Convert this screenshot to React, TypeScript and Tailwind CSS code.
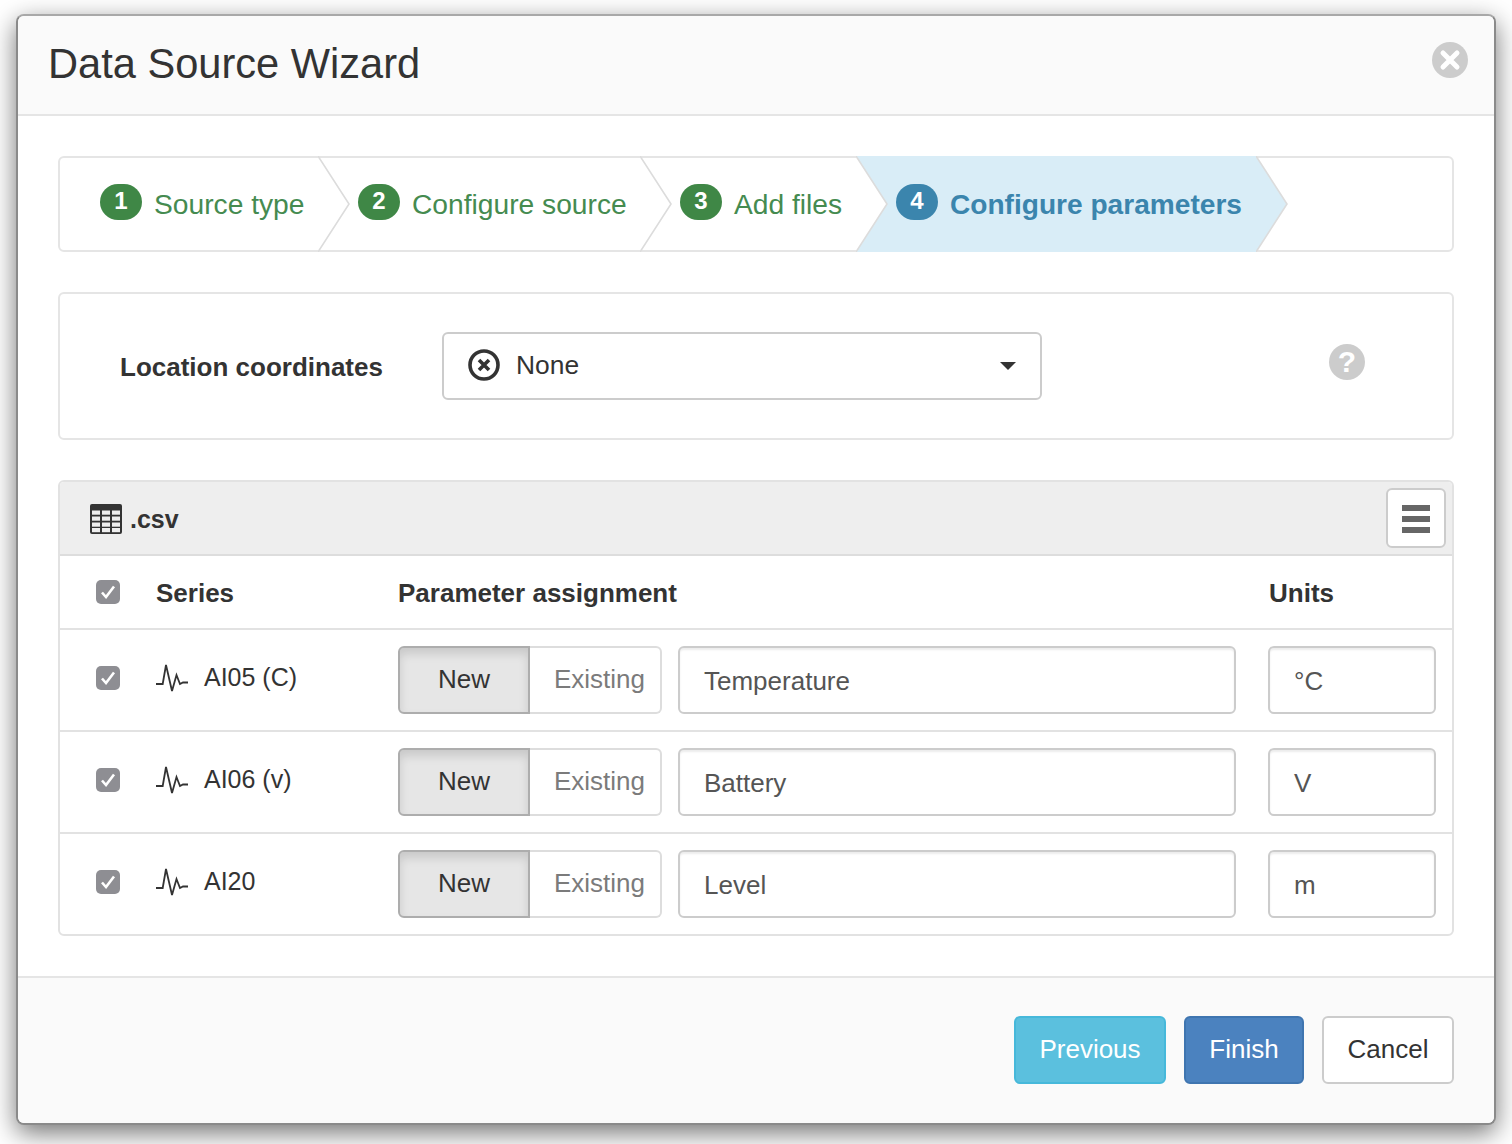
import React from "react";

const Badge = ({ n, blue }: { n: string; blue?: boolean }) => (
  <span
    className={`mb-[4px] flex h-[36px] w-[42px] shrink-0 justify-center rounded-[20px] text-[24px] font-bold leading-[33px] text-white ${
      blue ? "bg-[#3b85ad]" : "bg-[#3f8746]"
    }`}
  >
    {n}
  </span>
);

const Chevron = ({ fill }: { fill: string }) => (
  <svg className="absolute left-full top-0 z-10" width="33" height="96" viewBox="0 0 33 96">
    <polygon points="0,0 31,48 0,96" fill={fill} />
    <polyline points="0,0 31,48 0,96" fill="none" stroke="#dcdcdc" strokeWidth="1.6" />
  </svg>
);

const Step = ({ n, label, w, pl }: { n: string; label: string; w: string; pl: string }) => (
  <div className={`relative -my-[2px] flex items-center gap-3 ${w} ${pl}`}>
    <Badge n={n} />
    <span className="pt-[1px] text-[28.2px] text-[#458b50]">{label}</span>
    <Chevron fill="#ffffff" />
  </div>
);

const Check = () => (
  <span className="flex h-[24px] w-[24px] shrink-0 items-center justify-center rounded-[5px] bg-[#8e8e93]">
    <svg width="16" height="14" viewBox="0 0 16 14" fill="none">
      <polyline points="2,7.5 6,12 14,1.5" stroke="#ffffff" strokeWidth="2.6" />
    </svg>
  </span>
);

const Pulse = () => (
  <svg width="32" height="28" viewBox="0 0 32 28" fill="none" className="shrink-0">
    <polyline
      points="0,20 6.7,20 10,1 16,27 20.5,11 24,20 27,18.5 32,18.5"
      stroke="#333333"
      strokeWidth="1.8"
    />
  </svg>
);

const Field = ({ value, w }: { value: string; w: string }) => (
  <div
    className={`flex h-[68px] shrink-0 items-center rounded-[6px] border-2 border-[#cccccc] bg-white pl-[24px] pt-[3px] text-[26px] text-[#555555] shadow-[inset_0_2px_2px_rgba(0,0,0,0.075)] ${w}`}
  >
    {value}
  </div>
);

const Row = ({
  name,
  param,
  unit,
  last,
}: {
  name: string;
  param: string;
  unit: string;
  last?: boolean;
}) => (
  <div className={`flex items-center ${last ? "h-[100px]" : "h-[102px] border-b-2 border-[#e2e2e2]"}`}>
    <div className="flex w-[338px] items-center pb-[4px] pl-[36px] text-[#333333]">
      <Check />
      <span className="ml-[36px]">
        <Pulse />
      </span>
      <span className="ml-[16px] text-[25px]">{name}</span>
    </div>
    <div className="flex h-[68px] w-[264px] shrink-0 text-[26px]">
      <div className="flex w-[132px] items-center justify-center rounded-l-[6px] border-2 border-[#adadad] bg-[#e6e6e6] pb-[1px] text-[#333333] shadow-[inset_0_6px_10px_rgba(0,0,0,0.125)]">
        New
      </div>
      <div className="flex flex-1 items-center justify-end rounded-r-[6px] border-2 border-l-0 border-[#dddddd] bg-white pb-[1px] pr-[15px] text-[#7b7b7b]">
        Existing
      </div>
    </div>
    <div className="ml-[16px]">
      <Field value={param} w="w-[558px]" />
    </div>
    <div className="ml-[32px]">
      <Field value={unit} w="w-[168px]" />
    </div>
  </div>
);

export default function App() {
  return (
    <div className="h-[1144px] overflow-hidden bg-white pl-[16px] pt-[14px] font-['Liberation_Sans',Arial,sans-serif] text-[#333333]">
      <div className="flex h-[1111px] w-[1480px] flex-col rounded-[8px] border-2 border-[#8a8a8a] border-t-[#a8a8a8] bg-white shadow-[0_8px_26px_rgba(0,0,0,0.55)]">
        {/* Header */}
        <div className="flex h-[100px] shrink-0 items-center justify-between rounded-t-[6px] border-b-2 border-[#e5e5e5] bg-[#fafafa] pl-[30px] pr-[26px]">
          <h1 className="pb-[3px] text-[41.6px] font-normal leading-none text-[#333333]">Data Source Wizard</h1>
          <svg width="36" height="36" viewBox="0 0 36 36" className="mb-[10px]">
            <circle cx="18" cy="18" r="18" fill="#cccccc" />
            <path d="M11 11 L25 25 M25 11 L11 25" stroke="#ffffff" strokeWidth="5" strokeLinecap="round" />
          </svg>
        </div>

        {/* Body */}
        <div className="flex-1 px-[40px] pt-[40px]">
          {/* Stepper */}
          <div className="flex h-[96px] rounded-[6px] border-2 border-[#e5e5e5] bg-white">
            <Step n="1" label="Source type" w="w-[258px]" pl="pl-[40px]" />
            <Step n="2" label="Configure source" w="w-[322px]" pl="pl-[40px]" />
            <Step n="3" label="Add files" w="w-[216px]" pl="pl-[40px]" />
            <div className="relative -my-[2px] flex w-[400px] items-center gap-3 bg-[#d9edf7] pl-[40px]">
              <Badge n="4" blue />
              <span className="pt-[2px] text-[28.1px] font-bold text-[#3b85ad]">Configure parameters</span>
              <Chevron fill="#d9edf7" />
            </div>
          </div>

          {/* Location */}
          <div className="mt-[40px] flex h-[148px] items-center rounded-[6px] border-2 border-[#e5e5e5] bg-white pl-[60px]">
            <label className="w-[322px] pt-[3px] text-[26px] font-bold text-[#333333]">Location coordinates</label>
            <div className="flex h-[68px] w-[600px] items-center rounded-[6px] border-2 border-[#cccccc] bg-white px-[24px]">
              <svg width="32" height="32" viewBox="0 0 32 32" fill="none" className="mb-[2px] shrink-0">
                <circle cx="16" cy="16" r="14" stroke="#333333" strokeWidth="3.6" />
                <path d="M11 11 L21 21 M21 11 L11 21" stroke="#333333" strokeWidth="3.6" />
              </svg>
              <span className="ml-[16px] pb-[1px] text-[26.4px] text-[#333333]">None</span>
              <span className="ml-auto h-0 w-0 border-x-[8px] border-t-[8px] border-x-transparent border-t-[#333333]" />
            </div>
            <div className="mb-[8px] ml-[287px] flex h-[36px] w-[36px] items-center justify-center rounded-full bg-[#cccccc] text-[30px] font-bold leading-none text-white">
              ?
            </div>
          </div>

          {/* Table */}
          <div className="mt-[40px] h-[456px] rounded-[6px] border-2 border-[#e2e2e2] bg-white">
            <div className="flex h-[74px] items-center justify-between rounded-t-[4px] border-b-2 border-[#dddddd] bg-[#eeeeee] pl-[30px] pr-[6px]">
              <div className="flex items-center">
                <svg width="32" height="30" viewBox="0 0 32 30" className="mt-[1px]">
                  <rect width="32" height="30" rx="2" fill="#333333" />
                  {[6.5, 12.5, 18.5, 24].map((y) =>
                    [2, 12, 22].map((x) => <rect key={`${x}-${y}`} x={x} y={y} width="8" height="4.2" fill="#eeeeee" />)
                  )}
                </svg>
                <span className="ml-[8px] pt-[4px] text-[25px] font-bold text-[#333333]">.csv</span>
              </div>
              <div className="flex h-[60px] w-[60px] flex-col items-center justify-center gap-[5px] rounded-[6px] border-2 border-[#cccccc] bg-white pt-[1px]">
                <span className="h-[6px] w-[28px] bg-[#666666]" />
                <span className="h-[6px] w-[28px] bg-[#666666]" />
                <span className="h-[6px] w-[28px] bg-[#666666]" />
              </div>
            </div>
            <div className="flex h-[74px] items-center border-b-2 border-[#e2e2e2] text-[26px] font-bold">
              <div className="flex w-[338px] items-center pl-[36px]">
                <Check />
                <span className="ml-[36px] pt-[2px]">Series</span>
              </div>
              <div className="w-[871px] pt-[2px]">Parameter assignment</div>
              <div className="pt-[2px]">Units</div>
            </div>
            <Row name="AI05 (C)" param="Temperature" unit="°C" />
            <Row name="AI06 (v)" param="Battery" unit="V" />
            <Row name="AI20" param="Level" unit="m" last />
          </div>
        </div>

        {/* Footer */}
        <div className="flex h-[147px] shrink-0 items-start justify-end gap-[18px] rounded-b-[6px] border-t-2 border-[#e5e5e5] bg-[#fafafa] pr-[40px] pt-[38px] text-[26px]">
          <button className="h-[68px] w-[152px] rounded-[6px] border-2 border-[#46b8da] bg-[#5bc0de] pb-[2px] text-white">Previous</button>
          <button className="h-[68px] w-[120px] rounded-[6px] border-2 border-[#3f75b0] bg-[#4b82bf] pb-[2px] text-white">Finish</button>
          <button className="h-[68px] w-[132px] rounded-[6px] border-2 border-[#cccccc] bg-white pb-[2px] text-[#333333]">Cancel</button>
        </div>
      </div>
    </div>
  );
}
